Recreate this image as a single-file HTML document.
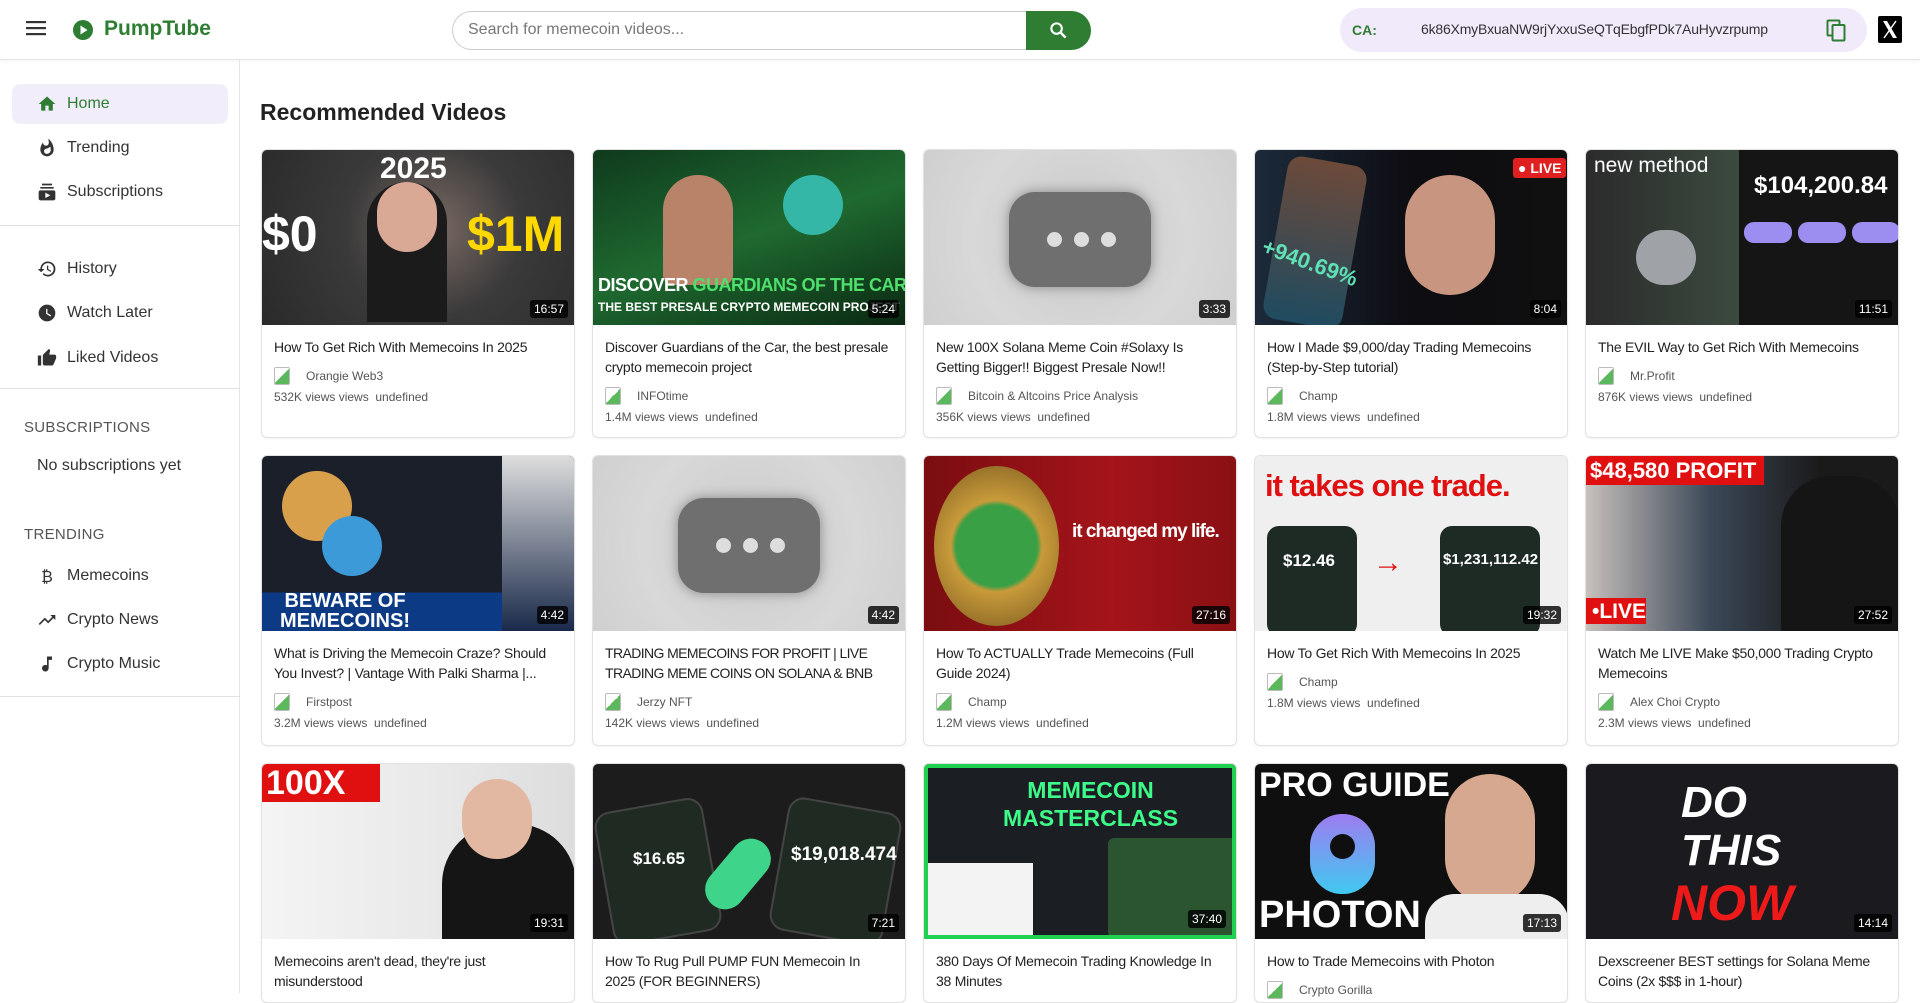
<!DOCTYPE html>
<html><head><meta charset="utf-8"><style>
*{box-sizing:border-box;margin:0;padding:0}
body{width:1920px;height:993px;overflow:hidden;background:#fff;font-family:"Liberation Sans",Arial,sans-serif;color:#222;position:relative}
.hdr{position:absolute;left:0;top:0;width:1920px;height:60px;border-bottom:1px solid #e3e3e3;background:#fff;box-shadow:0 2px 4px rgba(0,0,0,.04)}
.side{position:absolute;left:0;top:60px;width:240px;height:933px;border-right:1px solid #e5e5e5}
.item{position:absolute;left:12px;width:216px;height:40px;display:flex;align-items:center;padding-left:25px;font-size:16px;color:#333}
.item svg{width:20px;height:20px;margin-right:10px;fill:#333}
.item.act{background:#f1edfb;border-radius:8px;color:#2e7d32}
.item.act svg{fill:#2e7d32}
.div{position:absolute;left:0;width:240px;height:1px;background:#e0e0e0}
.sh{position:absolute;left:24px;font-size:15px;color:#555;letter-spacing:.3px}
.card{position:absolute;width:314px;border:1px solid #e2e2e2;border-radius:6px;overflow:hidden;background:#fff;box-shadow:0 1px 2px rgba(0,0,0,.05)}
.th{height:175px;position:relative;overflow:hidden}
.dur{position:absolute;right:6px;bottom:7px;background:rgba(0,0,0,.8);color:#fff;font-size:12px;padding:2px 4px;border-radius:3px}
.bd{padding:12px 12px 12px 12px}
.t{font-size:14px;line-height:20px;color:#222;letter-spacing:-.25px;white-space:normal}
.ch{display:flex;align-items:center;margin-top:9px;font-size:12px;color:#555;height:20px}
.ch i{display:inline-block;width:16px;height:18px;border:1px solid #bbb;border-radius:2px;margin-right:16px;background:linear-gradient(135deg,#fff 50%,#5cb85c 50%)}
.v{font-size:12px;color:#555;margin-top:4px}
.big{position:absolute;font-weight:bold;font-family:"Liberation Sans",sans-serif}
</style></head><body>
<div class="hdr">
 <svg style="position:absolute;left:26px;top:20px" width="20" height="16" viewBox="0 0 20 16"><rect y="1" width="20" height="2.2" fill="#333"/><rect y="7" width="20" height="2.2" fill="#333"/><rect y="13" width="20" height="2.2" fill="#333"/></svg>
 <svg style="position:absolute;left:72px;top:19px" width="22" height="22" viewBox="0 0 22 22"><circle cx="11" cy="11" r="10" fill="#2e7d32"/><path d="M8.5 6.5v9l7-4.5z" fill="#fff"/></svg>
 <div style="position:absolute;left:104px;top:17px;font-size:21px;font-weight:bold;color:#2e7d32">PumpTube</div>
 <div style="position:absolute;left:452px;top:11px;width:574px;height:39px;border:1px solid #ccc;border-right:none;border-radius:20px 0 0 20px;padding:9px 15px;font-size:16px;color:#777">Search for memecoin videos...</div>
 <div style="position:absolute;left:1026px;top:11px;width:65px;height:39px;background:#2e7d32;border-radius:0 20px 20px 0"><svg style="position:absolute;left:23px;top:10px" width="19" height="19" viewBox="0 0 20 20"><circle cx="8" cy="8" r="5.5" stroke="#fff" stroke-width="2.2" fill="none"/><path d="M12 12l5.5 5.5" stroke="#fff" stroke-width="2.6"/></svg></div>
 <div style="position:absolute;left:1340px;top:8px;width:527px;height:44px;background:#f1eafb;border-radius:22px">
  <span style="position:absolute;left:12px;top:14px;font-size:14px;font-weight:bold;color:#2e7d32">CA:</span>
  <span style="position:absolute;left:81px;top:13px;font-size:14px;color:#333;letter-spacing:-.2px">6k86XmyBxuaNW9rjYxxuSeQTqEbgfPDk7AuHyvzrpump</span>
  <svg style="position:absolute;left:486px;top:11px" width="20" height="23" viewBox="0 0 20 23"><rect x="1.5" y="1.5" width="12" height="15" rx="1" fill="none" stroke="#2e7d32" stroke-width="2"/><rect x="6.5" y="6" width="12" height="15.5" rx="1" fill="#f1eafb" stroke="#2e7d32" stroke-width="2"/></svg>
 </div>
 <div style="position:absolute;left:1878px;top:16px;width:24px;height:27px;background:#000;border-radius:2px"><svg width="24" height="27" viewBox="0 0 24 27"><path d="M5 5h4l10 17h-4z" fill="#fff"/><path d="M18 5L6 22" stroke="#fff" stroke-width="1.5"/></svg></div>
</div>

<div class="side">
 <div class="item act" style="top:24px"><svg viewBox="0 0 24 24"><path d="M10 20v-6h4v6h5v-8h3L12 3 2 12h3v8z"/></svg>Home</div>
 <div class="item" style="top:68px"><svg viewBox="0 0 24 24"><path d="M13.5.7s.7 2.6.7 4.8c0 2-1.3 3.7-3.4 3.7S7.3 7.5 7.3 5.5V5.2C5.3 7.6 4 10.7 4 14c0 4.4 3.6 8 8 8s8-3.6 8-8C20 8.6 17.4 3.8 13.5.7zM11.7 19c-1.8 0-3.2-1.4-3.2-3.1 0-1.6 1-2.8 2.8-3.1 1.8-.4 3.6-1.2 4.6-2.6.4 1.3.6 2.6.6 4 0 2.6-2.1 4.8-4.800 4.8z"/></svg>Trending</div>
 <div class="item" style="top:112px"><svg viewBox="0 0 24 24"><path d="M20 8H4V6h16zm-2-6H6v2h12zm4 10v8c0 1.1-.9 2-2 2H4c-1.1 0-2-.9-2-2v-8c0-1.1.9-2 2-2h16c1.1 0 2 .9 2 2zm-6 4l-6-3.3v6.5z"/></svg>Subscriptions</div>
 <div class="div" style="top:165px"></div>
 <div class="item" style="top:189px"><svg viewBox="0 0 24 24"><path d="M13 3a9 9 0 0 0-9 9H1l3.9 3.9L9 12H6a7 7 0 1 1 2.1 4.9l-1.4 1.4A9 9 0 1 0 13 3zm-1 5v5l4.3 2.5.7-1.2-3.5-2.1V8z"/></svg>History</div>
 <div class="item" style="top:233px"><svg viewBox="0 0 24 24"><path d="M12 2a10 10 0 1 0 0 20 10 10 0 0 0 0-20zm4.2 14.2L11 13V7h1.5v5.2l4.5 2.7z"/></svg>Watch Later</div>
 <div class="item" style="top:278px"><svg viewBox="0 0 24 24"><path d="M1 21h4V9H1zm22-11c0-1.1-.9-2-2-2h-6.3l1-4.6v-.3c0-.4-.2-.8-.4-1.1L14.2 1 7.6 7.6C7.2 7.9 7 8.4 7 9v10c0 1.1.9 2 2 2h9c.8 0 1.5-.5 1.8-1.2l3-7.1c.1-.2.2-.5.2-.7z"/></svg>Liked Videos</div>
 <div class="div" style="top:328px"></div>
 <div class="sh" style="top:359px">SUBSCRIPTIONS</div>
 <div style="position:absolute;left:37px;top:397px;font-size:16px;color:#333">No subscriptions yet</div>
 <div class="sh" style="top:466px">TRENDING</div>
 <div class="item" style="top:496px"><svg viewBox="0 0 24 24"><text x="5" y="19" font-size="19" font-family="Liberation Sans" fill="#333">₿</text></svg>Memecoins</div>
 <div class="item" style="top:540px"><svg viewBox="0 0 24 24"><path d="M16 6l2.3 2.3-4.9 4.9-4-4L2 16.6 3.4 18l6-6 4 4 6.3-6.3L22 12V6z"/></svg>Crypto News</div>
 <div class="item" style="top:584px"><svg viewBox="0 0 24 24"><path d="M12 3v10.6A4 4 0 1 0 14 17V7h4V3z"/></svg>Crypto Music</div>
 <div class="div" style="top:636px"></div>
</div>

<div style="position:absolute;left:260px;top:99px;font-size:23px;font-weight:bold;color:#222">Recommended Videos</div>

<!-- Row 1 -->
<div class="card" style="left:261px;top:149px;height:289px"><div class="th" style="background:radial-gradient(circle at 55% 45%,#7a6a63 0,#3a3a3a 45%,#2a2a2a 100%)"><span class="big" style="left:0;top:55px;font-size:50px;color:#fff">$0</span><span class="big" style="left:205px;top:55px;font-size:50px;color:#ffd800">$1M</span><span class="big" style="left:118px;top:2px;font-size:30px;color:#fff">2025</span><div style="position:absolute;left:105px;top:32px;width:80px;height:140px;background:#1b1b1b;border-radius:40px 40px 0 0"></div><div style="position:absolute;left:115px;top:32px;width:60px;height:70px;background:#d9a995;border-radius:30px"></div><div class="dur">16:57</div></div><div class="bd"><div class="t">How To Get Rich With Memecoins In 2025</div><div class="ch"><i></i>Orangie Web3</div><div class="v">532K views views &nbsp;undefined</div></div></div>

<div class="card" style="left:592px;top:149px;height:289px"><div class="th" style="background:linear-gradient(160deg,#0f3a1d,#1f6a30 50%,#0a2812)"><div style="position:absolute;left:70px;top:25px;width:70px;height:110px;background:#b9836a;border-radius:35px 35px 10px 10px"></div><div style="position:absolute;left:190px;top:25px;width:60px;height:60px;background:#34b7a7;border-radius:30px"></div><div class="big" style="left:5px;top:125px;font-size:18px;color:#fff;width:310px;white-space:nowrap;letter-spacing:-.5px">DISCOVER <span style="color:#4fdf6c">GUARDIANS OF THE CAR</span></div><div class="big" style="left:5px;top:150px;font-size:12px;color:#fff;white-space:nowrap">THE BEST PRESALE CRYPTO MEMECOIN PROJECT</div><div class="dur">5:24</div></div><div class="bd"><div class="t">Discover Guardians of the Car, the best presale crypto memecoin project</div><div class="ch"><i></i>INFOtime</div><div class="v">1.4M views views &nbsp;undefined</div></div></div>

<div class="card" style="left:923px;top:149px;height:289px"><div class="th" style="background:radial-gradient(circle,#c9c9c9,#d8d8d8 60%,#cfcfcf)"><div style="position:absolute;left:85px;top:42px;width:142px;height:95px;background:#6f6f6f;border-radius:26px;box-shadow:0 0 12px #888"></div><div style="position:absolute;left:123px;top:82px;width:15px;height:15px;background:#ddd;border-radius:50%"></div><div style="position:absolute;left:150px;top:82px;width:15px;height:15px;background:#ddd;border-radius:50%"></div><div style="position:absolute;left:177px;top:82px;width:15px;height:15px;background:#ddd;border-radius:50%"></div><div class="dur">3:33</div></div><div class="bd"><div class="t">New 100X Solana Meme Coin #Solaxy Is Getting Bigger!! Biggest Presale Now!!</div><div class="ch"><i></i>Bitcoin &amp; Altcoins Price Analysis</div><div class="v">356K views views &nbsp;undefined</div></div></div>

<div class="card" style="left:1254px;top:149px;height:289px"><div class="th" style="background:linear-gradient(90deg,#1c2a3a,#0d0d12 50%,#101010)"><div style="position:absolute;left:20px;top:10px;width:80px;height:165px;background:linear-gradient(180deg,#6d4a3a,#1f4b60);border-radius:14px;transform:rotate(10deg)"></div><div class="big" style="left:5px;top:100px;font-size:22px;color:#5fe0b5;transform:rotate(20deg)">+940.69%</div><div style="position:absolute;left:150px;top:25px;width:90px;height:120px;background:#c89580;border-radius:45px"></div><div style="position:absolute;left:258px;top:8px;background:#e02020;color:#fff;font-weight:bold;font-size:14px;padding:2px 5px;border-radius:3px">● LIVE</div><div class="dur">8:04</div></div><div class="bd"><div class="t">How I Made $9,000/day Trading Memecoins (Step-by-Step tutorial)</div><div class="ch"><i></i>Champ</div><div class="v">1.8M views views &nbsp;undefined</div></div></div>

<div class="card" style="left:1585px;top:149px;height:289px"><div class="th" style="background:linear-gradient(90deg,#2b2b2b 0,#3b4a3f 49%,#151515 49%)"><span style="position:absolute;left:8px;top:4px;font-size:21px;color:#fff">new method</span><span class="big" style="left:168px;top:22px;font-size:24px;color:#fff">$104,200.84</span><div style="position:absolute;left:158px;top:72px;width:48px;height:21px;background:#9c8ef0;border-radius:10px"></div><div style="position:absolute;left:212px;top:72px;width:48px;height:21px;background:#9c8ef0;border-radius:10px"></div><div style="position:absolute;left:266px;top:72px;width:48px;height:21px;background:#9c8ef0;border-radius:10px"></div><div style="position:absolute;left:50px;top:80px;width:60px;height:55px;background:#9fa3a8;border-radius:30px"></div><div class="dur">11:51</div></div><div class="bd"><div class="t">The EVIL Way to Get Rich With Memecoins</div><div class="ch"><i></i>Mr.Profit</div><div class="v">876K views views &nbsp;undefined</div></div></div>

<!-- Row 2 -->
<div class="card" style="left:261px;top:455px;height:291px"><div class="th" style="background:linear-gradient(180deg,#1a1f2a 0,#1a1f2a 78%,#0d3a85 78%)"><div style="position:absolute;left:20px;top:15px;width:70px;height:70px;background:#d8a04a;border-radius:50%"></div><div style="position:absolute;left:60px;top:60px;width:60px;height:60px;background:#3d9ad9;border-radius:50%"></div><div style="position:absolute;left:240px;top:0;width:74px;height:175px;background:linear-gradient(#ddd,#1a2a4a)"></div><div class="big" style="left:18px;top:135px;font-size:20px;color:#fff;text-align:center;line-height:20px">BEWARE OF<br>MEMECOINS!</div><div class="dur">4:42</div></div><div class="bd"><div class="t">What is Driving the Memecoin Craze? Should You Invest? | Vantage With Palki Sharma |...</div><div class="ch"><i></i>Firstpost</div><div class="v">3.2M views views &nbsp;undefined</div></div></div>

<div class="card" style="left:592px;top:455px;height:291px"><div class="th" style="background:radial-gradient(circle,#c9c9c9,#d8d8d8 60%,#cfcfcf)"><div style="position:absolute;left:85px;top:42px;width:142px;height:95px;background:#6f6f6f;border-radius:26px;box-shadow:0 0 12px #888"></div><div style="position:absolute;left:123px;top:82px;width:15px;height:15px;background:#ddd;border-radius:50%"></div><div style="position:absolute;left:150px;top:82px;width:15px;height:15px;background:#ddd;border-radius:50%"></div><div style="position:absolute;left:177px;top:82px;width:15px;height:15px;background:#ddd;border-radius:50%"></div><div class="dur">4:42</div></div><div class="bd"><div class="t" style="letter-spacing:-.6px">TRADING MEMECOINS FOR PROFIT | LIVE TRADING MEME COINS ON SOLANA &amp; BNB</div><div class="ch"><i></i>Jerzy NFT</div><div class="v">142K views views &nbsp;undefined</div></div></div>

<div class="card" style="left:923px;top:455px;height:291px"><div class="th" style="background:linear-gradient(90deg,#7a0d10,#a4141a 60%,#8a1014)"><div style="position:absolute;left:10px;top:10px;width:125px;height:160px;background:radial-gradient(circle,#3aa045 0,#3aa045 40%,#c89a3a 45%,#7a5a20 100%);border-radius:50%"></div><span class="big" style="left:148px;top:65px;font-size:19px;color:#fff;letter-spacing:-1px;white-space:nowrap">it changed my life.</span><div class="dur">27:16</div></div><div class="bd"><div class="t">How To ACTUALLY Trade Memecoins (Full Guide 2024)</div><div class="ch"><i></i>Champ</div><div class="v">1.2M views views &nbsp;undefined</div></div></div>

<div class="card" style="left:1254px;top:455px;height:291px"><div class="th" style="background:#efefef"><span class="big" style="left:10px;top:12px;font-size:31px;color:#e01010;letter-spacing:-1px">it takes one trade.</span><div style="position:absolute;left:12px;top:70px;width:90px;height:110px;background:#1e2a24;border-radius:12px"></div><div style="position:absolute;left:185px;top:70px;width:100px;height:110px;background:#1e2a24;border-radius:12px"></div><span class="big" style="left:28px;top:95px;font-size:17px;color:#fff">$12.46</span><span class="big" style="left:188px;top:95px;font-size:15px;color:#fff">$1,231,112.42</span><span class="big" style="left:118px;top:90px;font-size:30px;color:#e01010">→</span><div class="dur">19:32</div></div><div class="bd"><div class="t">How To Get Rich With Memecoins In 2025</div><div class="ch"><i></i>Champ</div><div class="v">1.8M views views &nbsp;undefined</div></div></div>

<div class="card" style="left:1585px;top:455px;height:291px"><div class="th" style="background:linear-gradient(90deg,#c8c0bc,#3b4858 40%,#1a1a1a 75%)"><div style="position:absolute;left:0;top:0;width:178px;height:29px;background:#e01010"></div><span class="big" style="left:4px;top:2px;font-size:22px;color:#fff">$48,580 PROFIT</span><div style="position:absolute;left:195px;top:20px;width:119px;height:155px;background:#151515;border-radius:50px 50px 0 0"></div><div style="position:absolute;left:0;top:142px;width:60px;height:26px;background:#e01010"></div><span class="big" style="left:6px;top:144px;font-size:21px;color:#fff">•LIVE</span><div class="dur">27:52</div></div><div class="bd"><div class="t">Watch Me LIVE Make $50,000 Trading Crypto Memecoins</div><div class="ch"><i></i>Alex Choi Crypto</div><div class="v">2.3M views views &nbsp;undefined</div></div></div>

<!-- Row 3 -->
<div class="card" style="left:261px;top:763px;height:240px"><div class="th" style="background:linear-gradient(90deg,#f4f4f4 0,#eaeaea 50%,#ddd)"><div style="position:absolute;left:0;top:0;width:118px;height:38px;background:#e01010"></div><span class="big" style="left:4px;top:0;font-size:34px;color:#fff">100X</span><div style="position:absolute;left:180px;top:60px;width:134px;height:115px;background:#151515;border-radius:60px 60px 0 0"></div><div style="position:absolute;left:200px;top:15px;width:70px;height:80px;background:#e2b8a2;border-radius:35px"></div><div class="dur">19:31</div></div><div class="bd"><div class="t">Memecoins aren't dead, they're just misunderstood</div></div></div>

<div class="card" style="left:592px;top:763px;height:240px"><div class="th" style="background:#1c1c1c"><div style="position:absolute;left:10px;top:40px;width:110px;height:135px;background:#1f2b22;border:2px solid #444;border-radius:16px;transform:rotate(-10deg)"></div><div style="position:absolute;left:185px;top:40px;width:115px;height:135px;background:#1f2b22;border:2px solid #444;border-radius:16px;transform:rotate(10deg)"></div><span class="big" style="left:40px;top:85px;font-size:17px;color:#fff">$16.65</span><span class="big" style="left:198px;top:80px;font-size:19px;color:#fff">$19,018.474</span><div style="position:absolute;left:125px;top:70px;width:40px;height:80px;background:#3ed58a;border-radius:20px;transform:rotate(40deg)"></div><div class="dur">7:21</div></div><div class="bd"><div class="t">How To Rug Pull PUMP FUN Memecoin In 2025 (FOR BEGINNERS)</div></div></div>

<div class="card" style="left:923px;top:763px;height:240px"><div class="th" style="background:#1b1e22;border:4px solid #20d050"><div style="position:absolute;left:0;top:95px;width:105px;height:75px;background:#f3f3f3"></div><div style="position:absolute;left:180px;top:70px;width:130px;height:100px;background:#2a5530;border-radius:6px"></div><span class="big" style="left:75px;top:8px;font-size:23px;color:#3dfc8a;text-align:center;line-height:28px">MEMECOIN<br>MASTERCLASS</span><div class="dur">37:40</div></div><div class="bd"><div class="t">380 Days Of Memecoin Trading Knowledge In 38 Minutes</div></div></div>

<div class="card" style="left:1254px;top:763px;height:240px"><div class="th" style="background:#0f0f0f"><span class="big" style="left:4px;top:2px;font-size:34px;color:#fff">PRO GUIDE</span><span class="big" style="left:4px;top:130px;font-size:38px;color:#fff">PHOTON</span><div style="position:absolute;left:55px;top:50px;width:65px;height:80px;background:linear-gradient(#9d7cf0,#40c9f0);border-radius:32px"></div><div style="position:absolute;left:75px;top:70px;width:25px;height:25px;background:#0f0f0f;border-radius:50%"></div><div style="position:absolute;left:190px;top:10px;width:90px;height:130px;background:#d6a88f;border-radius:45px"></div><div style="position:absolute;left:170px;top:130px;width:144px;height:45px;background:#eee;border-radius:30px 30px 0 0"></div><div class="dur">17:13</div></div><div class="bd"><div class="t">How to Trade Memecoins with Photon</div><div class="ch"><i></i>Crypto Gorilla</div></div></div>

<div class="card" style="left:1585px;top:763px;height:240px"><div class="th" style="background:#1a1a1f"><span class="big" style="left:95px;top:15px;font-size:44px;color:#fff;font-style:italic;line-height:48px">DO<br>THIS</span><span class="big" style="left:85px;top:110px;font-size:50px;color:#ee1a1a;font-style:italic">NOW</span><div class="dur">14:14</div></div><div class="bd"><div class="t">Dexscreener BEST settings for Solana Meme Coins (2x $$$ in 1-hour)</div></div></div>
</body></html>
